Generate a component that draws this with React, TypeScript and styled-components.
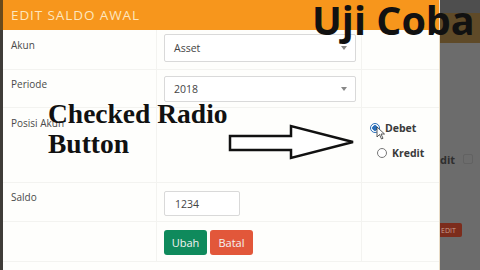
import React from "react";
import styled, { createGlobalStyle } from "styled-components";

const Global = createGlobalStyle`
  html, body { margin: 0; padding: 0; width: 480px; height: 270px; overflow: hidden; background: #6b6b6b; }
  * { box-sizing: border-box; }
`;

const Page = styled.div`
  position: relative;
  display: flex;
  width: 480px;
  height: 270px;
  font-family: "Open Sans", "Noto Sans", sans-serif;
`;

const LeftStrip = styled.div`
  width: 3px;
  background: linear-gradient(#6a4a1a 0 30px, #3f3c38 30px);
`;

const Modal = styled.div`
  width: 437px;
  background: #fefefc;
  display: flex;
  flex-direction: column;
  border-right: 1px solid #e9dcc6;
`;

const Header = styled.div`
  height: 30px;
  background: #f7961c;
  color: #fde6bf;
  font-size: 13.5px;
  padding-left: 8px;
  display: flex;
  align-items: center;
  letter-spacing: 0.9px;
`;

const Row = styled.div<{ $h: number }>`
  display: grid;
  grid-template-columns: 154px 205px 77px;
  height: ${(p) => p.$h}px;
  border-bottom: 1px solid #f3f3f0;
`;

const Cell = styled.div<{ $pt: number }>`
  padding-top: ${(p) => p.$pt}px;
  border-right: 1px solid #f3f3f0;
  &:last-child { border-right: none; }
`;

const LabelCell = styled(Cell)`
  padding-left: 8px;
  font-size: 10px;
  line-height: 15px;
  color: #4a4a4a;
`;

const FieldCell = styled(Cell)`
  padding-left: 7px;
  display: flex;
  align-items: flex-start;
  gap: 3px;
`;

const Select = styled.div<{ $h: number }>`
  width: 192px;
  height: ${(p) => p.$h}px;
  border: 1px solid #d9d9d9;
  border-radius: 2px;
  background: #fff;
  display: flex;
  align-items: center;
  justify-content: space-between;
  padding: 0 8px 0 9px;
  font-size: 10.5px;
  color: #444;
`;

const Caret = styled.span`
  width: 0;
  height: 0;
  border-left: 3px solid transparent;
  border-right: 3px solid transparent;
  border-top: 4px solid #888;
`;

const Input = styled.div`
  width: 76px;
  height: 25px;
  border: 1px solid #d9d9d9;
  border-radius: 2px;
  background: #fff;
  display: flex;
  align-items: center;
  padding-left: 10px;
  font-size: 10.5px;
  color: #444;
`;

const Button = styled.div<{ $bg: string }>`
  width: 43px;
  height: 25px;
  border-radius: 3px;
  background: ${(p) => p.$bg};
  color: #f3f3f3;
  font-size: 11px;
  display: flex;
  align-items: center;
  justify-content: center;
`;

const RadioGroup = styled.div`
  display: flex;
  flex-direction: column;
  gap: 11px;
  padding-left: 8px;
`;

const RadioRow = styled.div<{ $indent: number }>`
  display: flex;
  align-items: center;
  gap: 5px;
  padding-left: ${(p) => p.$indent}px;
  font-size: 10.5px;
  font-weight: 700;
  color: #3a3a3a;
  height: 14px;
  position: relative;
`;

const Radio = styled.span<{ $checked?: boolean }>`
  width: 10px;
  height: 10px;
  border-radius: 50%;
  border: 1.3px solid ${(p) => (p.$checked ? "#2a6fb8" : "#777")};
  background: ${(p) => (p.$checked ? "radial-gradient(#2a6fb8 0 2.5px, #fff 3px)" : "#fff")};
`;

const Cursor = styled.svg`
  position: absolute;
  left: 6px;
  top: 5px;
`;

const Backdrop = styled.div`
  flex: 1;
  display: flex;
  flex-direction: column;
  background: #6c6c6c;
`;

const BackTop = styled.div`
  height: 13px;
  background: #4e4e4e;
`;

const BackHeader = styled.div`
  height: 30px;
  background: #5f4a28;
`;

const BackText = styled.div`
  margin-top: 108px;
  font-size: 11px;
  font-weight: 700;
  color: #2e2e2e;
  display: flex;
  gap: 8px;
  height: 16px;
  align-items: center;
`;

const BackIcon = styled.span`
  width: 10px;
  height: 10px;
  border: 1px solid #626262;
  border-radius: 2px;
`;

const BackButton = styled.div`
  margin-top: 56px;
  width: 22px;
  height: 14px;
  background: #7c2c1c;
  color: #c9a08f;
  font-size: 7px;
  display: flex;
  align-items: center;
  padding-left: 1px;
  border-radius: 0 2px 2px 0;
`;

const UjiCoba = styled.div`
  position: absolute;
  left: 312px;
  top: -7px;
  font-family: "Open Sans", sans-serif;
  font-weight: 700;
  font-size: 39.5px;
  color: #111;
  letter-spacing: 0;
  white-space: nowrap;
`;

const Annotation = styled.div`
  position: absolute;
  left: 48px;
  top: 99px;
  font-family: "Liberation Serif", "Times New Roman", serif;
  font-weight: 700;
  font-size: 27.5px;
  line-height: 30px;
  color: #111;
  white-space: nowrap;
`;

const Arrow = styled.svg`
  position: absolute;
  left: 226px;
  top: 122px;
`;

export default function App() {
  return (
    <>
      <Global />
      <Page>
        <LeftStrip />
        <Modal>
          <Header>EDIT SALDO AWAL</Header>
          <Row $h={40}>
            <LabelCell $pt={8}>Akun</LabelCell>
            <FieldCell $pt={4}>
              <Select $h={28}>
                <span>Asset</span>
                <Caret />
              </Select>
            </FieldCell>
            <Cell $pt={0} />
          </Row>
          <Row $h={38}>
            <LabelCell $pt={7}>Periode</LabelCell>
            <FieldCell $pt={6}>
              <Select $h={26}>
                <span>2018</span>
                <Caret />
              </Select>
            </FieldCell>
            <Cell $pt={0} />
          </Row>
          <Row $h={75}>
            <LabelCell $pt={8}>Posisi Akun</LabelCell>
            <FieldCell $pt={0} />
            <Cell $pt={13}>
              <RadioGroup>
                <RadioRow $indent={0}>
                  <Radio $checked />
                  <span>Debet</span>
                  <Cursor width="10" height="14" viewBox="0 0 10 14">
                    <path d="M1 1 L1 11 L3.5 8.5 L5.5 13 L7 12.3 L5 8 L8.5 8 Z" fill="#fff" stroke="#333" strokeWidth="0.8" />
                  </Cursor>
                </RadioRow>
                <RadioRow $indent={7}>
                  <Radio />
                  <span>Kredit</span>
                </RadioRow>
              </RadioGroup>
            </Cell>
          </Row>
          <Row $h={39}>
            <LabelCell $pt={7}>Saldo</LabelCell>
            <FieldCell $pt={8}>
              <Input>1234</Input>
            </FieldCell>
            <Cell $pt={0} />
          </Row>
          <Row $h={40}>
            <LabelCell $pt={0} />
            <FieldCell $pt={8}>
              <Button $bg="#0f8a5c">Ubah</Button>
              <Button $bg="#e2573a">Batal</Button>
            </FieldCell>
            <Cell $pt={0} />
          </Row>
        </Modal>
        <Backdrop>
          <BackTop />
          <BackHeader />
          <BackText>
            <span>dit</span>
            <BackIcon />
          </BackText>
          <BackButton>EDIT</BackButton>
        </Backdrop>
        <UjiCoba>Uji Coba</UjiCoba>
        <Annotation>
          Checked Radio
          <br />
          Button
        </Annotation>
        <Arrow width="134" height="42" viewBox="0 0 134 42">
          <path
            d="M4 14 L65 14 L65 4 L127 20 L65 36 L65 28 L4 28 Z"
            fill="#fff"
            stroke="#111"
            strokeWidth="2.5"
            strokeLinejoin="miter"
          />
        </Arrow>
      </Page>
    </>
  );
}
